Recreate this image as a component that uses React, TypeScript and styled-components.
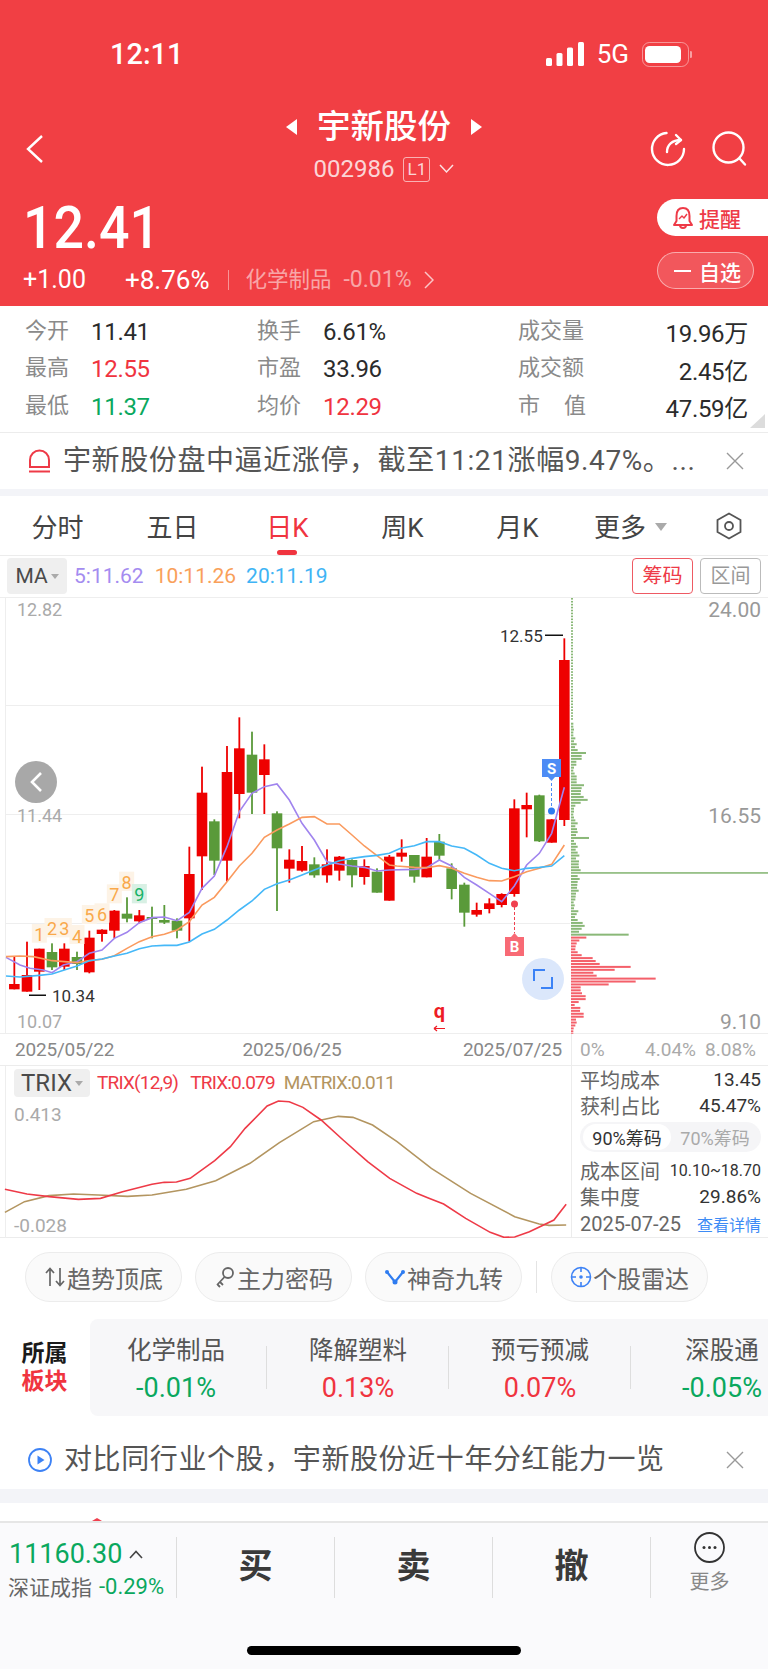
import styled, { createGlobalStyle } from 'styled-components';

const RED = '#f0343f';
const GREEN = '#0aa85e';
const BAND = '#f3f4f8';
const LINE = '#ececec';

const GlobalStyle = createGlobalStyle`
  html, body {
    margin: 0;
    padding: 0;
    background: #fff;
  }
  * {
    box-sizing: border-box;
  }
  body {
    font-family: Roboto, "Noto Sans CJK SC", sans-serif;
  }
`;

const Page = styled.div`
  width: 768px;
  height: 1669px;
  overflow: hidden;
  background: #fff;
  display: flex;
  flex-direction: column;
`;

/* header */
const Header = styled.header`
  height: 306px;
  background: #f13f44;
  color: #fff;
  flex: none;
`;

const StatusBar = styled.div`
  height: 68px;
  padding: 40px 76px 0 110px;
  display: flex;
  align-items: center;
  justify-content: space-between;
`;

const Clock = styled.div`
  font-size: 29px;
  font-weight: 500;
  line-height: 34px;
`;

const StatusIcons = styled.div`
  display: flex;
  align-items: center;
  gap: 13px;
  font-size: 26px;
  line-height: 34px;
`;

const NavRow = styled.div`
  margin-top: 40px;
  height: 82px;
  display: grid;
  grid-template-columns: 1fr auto 1fr;
  align-items: center;
`;

const BackButton = styled.div`
  padding-left: 26px;
  display: flex;
`;

const TitleBlock = styled.div`
  align-self: start;
  display: flex;
  flex-direction: column;
  align-items: center;
`;

const TitleLine = styled.div`
  display: flex;
  align-items: center;
  gap: 20px;
  height: 38px;
  font-size: 33.5px;
  line-height: 38px;
  font-weight: 500;
`;

const CodeLine = styled.div`
  margin-top: 11px;
  height: 24px;
  display: flex;
  align-items: center;
  gap: 9px;
  font-size: 24px;
  color: rgba(255, 255, 255, 0.8);
`;

const LevelTag = styled.span`
  width: 27px;
  height: 25px;
  border: 1px solid rgba(255, 255, 255, 0.6);
  border-radius: 3px;
  font-size: 17px;
  display: flex;
  align-items: center;
  justify-content: center;
`;

const NavActions = styled.div`
  display: flex;
  justify-content: flex-end;
  gap: 26px;
  padding-right: 20px;
`;

const QuoteRow = styled.div`
  margin-top: 6px;
  display: flex;
  justify-content: space-between;
`;

const QuoteLeft = styled.div`
  padding-left: 23px;
`;

const Price = styled.div`
  font-size: 59px;
  font-weight: 500;
  line-height: 58px;
  height: 58px;
  transform: scaleX(0.91);
  transform-origin: 0 50%;
  margin-top: 3px;
`;

const ChangeLine = styled.div`
  margin-top: 11px;
  height: 24px;
  display: flex;
  align-items: center;
  font-size: 25px;
  line-height: 24px;
`;

const ChangeValue = styled.span`
  width: 102px;
  flex: none;
`;

const ChangePct = styled.span`
  font-size: 26px;
`;

const Sep = styled.span`
  width: 1px;
  height: 20px;
  margin: 0 17px 0 18px;
  background: rgba(255, 255, 255, 0.45);
`;

const SectorLink = styled.span`
  display: flex;
  align-items: center;
  gap: 12px;
  font-size: 21.5px;
  color: rgba(255, 255, 255, 0.55);
`;

const SectorPct = styled.span`
  font-size: 23px;
`;

const QuoteRight = styled.div`
  padding-top: 3px;
  width: 111px;
  display: flex;
  flex-direction: column;
  gap: 16px;
`;

const RemindButton = styled.div`
  height: 37px;
  border-radius: 19px 0 0 19px;
  background: #fff;
  color: #ee3a47;
  font-size: 21px;
  font-weight: 500;
  display: flex;
  align-items: center;
  gap: 5px;
  padding-left: 15px;
`;

const WatchButton = styled.div`
  width: 97px;
  height: 37px;
  border-radius: 19px;
  border: 1px solid rgba(255, 255, 255, 0.5);
  background: rgba(255, 255, 255, 0.13);
  font-size: 21px;
  font-weight: 500;
  display: flex;
  align-items: center;
  gap: 8px;
  padding-left: 16px;
  &::before {
    content: '';
    width: 17px;
    height: 2px;
    background: #fff;
  }
`;

/* stats */
const Stats = styled.div`
  height: 126px;
  flex: none;
  padding: 7px 20px 0 25px;
  display: grid;
  grid-template-columns: 232px 261px 230px;
  grid-auto-rows: 37.5px;
  position: relative;
  &::after {
    content: '';
    position: absolute;
    right: 3px;
    bottom: 4px;
    border-style: solid;
    border-width: 0 0 14px 15px;
    border-color: transparent transparent #dcdcdc transparent;
  }
`;

const StatCell = styled.div`
  display: flex;
  align-items: center;
  font-size: 24px;
  letter-spacing: -0.3px;
  color: #2b2b2b;
`;

const StatLabel = styled.span`
  width: 66px;
  flex: none;
  font-size: 22px;
  letter-spacing: 0;
  line-height: 28px;
  margin-bottom: 2px;
  color: #8a8a8a;
`;

const WideLabel = styled.span<{ $spread?: boolean }>`
  width: 68px;
  flex: none;
  font-size: 22px;
  letter-spacing: 0;
  line-height: 28px;
  margin-bottom: 2px;
  color: #8a8a8a;
  display: flex;
  justify-content: ${(p) => (p.$spread ? 'space-between' : 'flex-start')};
  white-space: nowrap;
`;

const StatValue = styled.span<{ $color?: string; $right?: boolean }>`
  color: ${(p) => p.$color || '#2b2b2b'};
  margin-left: ${(p) => (p.$right ? 'auto' : '0')};
`;

/* notice */
const Notice = styled.div<{ $h: number; $top: number }>`
  height: ${(p) => p.$h}px;
  flex: none;
  padding: ${(p) => p.$top}px 24px 0 28px;
  display: flex;
  align-items: center;
  font-size: 28px;
  line-height: 36px;
  color: #555;
  white-space: nowrap;
  border-top: ${(p) => (p.$top ? 'none' : `1px solid ${LINE}`)};
`;

const NoticeText = styled.span`
  margin-left: 12px;
  flex: 1;
  letter-spacing: 0.6px;
`;

const Band = styled.div<{ $h: number }>`
  height: ${(p) => p.$h}px;
  flex: none;
  background: ${BAND};
`;

/* tabs */
const Tabs = styled.nav`
  height: 60px;
  flex: none;
  display: grid;
  grid-template-columns: repeat(6, 115px) 1fr;
  border-bottom: 1px solid ${LINE};
`;

const Tab = styled.div<{ $active?: boolean; $shift?: number }>`
  position: relative;
  display: flex;
  align-items: center;
  justify-content: center;
  gap: 9px;
  padding-right: ${(p) => p.$shift || 0}px;
  font-size: 26px;
  color: ${(p) => (p.$active ? RED : '#444')};
  &::after {
    content: '';
    display: ${(p) => (p.$active ? 'block' : 'none')};
    position: absolute;
    left: 47px;
    bottom: 0;
    width: 20px;
    height: 5px;
    border-radius: 3px;
    background: ${RED};
  }
`;

const Caret = styled.span`
  width: 0;
  height: 0;
  border-style: solid;
  border-width: 8px 6px 0 6px;
  border-color: #aaa transparent transparent transparent;
  margin-top: 2px;
`;

/* MA row */
const MaRow = styled.div`
  height: 41px;
  flex: none;
  padding: 2px 7px 0 7px;
  display: flex;
  align-items: flex-start;
  font-size: 21px;
  line-height: 36px;
`;

const GreyChip = styled.div<{ $w: number; $h: number; $size?: number }>`
  width: ${(p) => p.$w}px;
  height: ${(p) => p.$h}px;
  background: #efefef;
  border-radius: 4px;
  color: #4a4a4a;
  font-size: ${(p) => p.$size || 21}px;
  display: flex;
  align-items: center;
  justify-content: center;
  gap: 3px;
  flex: none;
  &::after {
    content: '';
    border-style: solid;
    border-width: 5px 4px 0 4px;
    border-color: #aaa transparent transparent transparent;
  }
`;

const MaValue = styled.span<{ $color: string; $gap: number }>`
  color: ${(p) => p.$color};
  margin-left: ${(p) => p.$gap}px;
`;

const OutlineButton = styled.div<{ $active?: boolean }>`
  width: 61px;
  height: 36px;
  border-radius: 4px;
  border: 1px solid ${(p) => (p.$active ? '#ee5a63' : '#bbb')};
  color: ${(p) => (p.$active ? '#ee3a47' : '#999')};
  font-size: 20px;
  display: flex;
  align-items: center;
  justify-content: center;
`;

const ToggleGroup = styled.div`
  margin-left: auto;
  display: flex;
  gap: 7px;
`;

/* main chart */
const ChartPane = styled.div`
  position: relative;
  height: 437px;
  flex: none;
  svg {
    display: block;
  }
`;

const RoundButton = styled.div<{ $x: number; $y: number; $bg: string }>`
  position: absolute;
  left: ${(p) => p.$x}px;
  top: ${(p) => p.$y}px;
  width: 42px;
  height: 42px;
  border-radius: 50%;
  background: ${(p) => p.$bg};
  display: flex;
  align-items: center;
  justify-content: center;
`;

/* axis */
const AxisRow = styled.div`
  height: 32px;
  flex: none;
  display: grid;
  grid-template-columns: 571px 1fr;
  border-bottom: 1px solid ${LINE};
  font-size: 19px;
  letter-spacing: -0.2px;
`;

const AxisDates = styled.div`
  padding: 0 9px 0 15px;
  display: flex;
  align-items: center;
  justify-content: space-between;
  color: #888;
  span:nth-child(2) {
    margin-left: 7px;
  }
`;

const AxisPct = styled.div`
  border-left: 1px solid ${LINE};
  padding: 0 12px 0 8px;
  display: flex;
  align-items: center;
  gap: 9px;
  font-size: 19px;
  letter-spacing: 0;
  color: #aaa;
  span:first-child {
    margin-right: auto;
  }
`;

/* TRIX */
const TrixRow = styled.div`
  height: 172px;
  flex: none;
  display: grid;
  grid-template-columns: 571px 1fr;
  border-bottom: 1px solid ${LINE};
`;

const TrixPane = styled.div`
  position: relative;
  svg {
    display: block;
  }
`;

const TrixLegend = styled.div`
  position: absolute;
  left: 14px;
  top: 3px;
  display: flex;
  align-items: center;
  font-size: 19px;
  line-height: 28px;
`;

const LegendValue = styled.span<{ $color: string; $gap: number }>`
  color: ${(p) => p.$color};
  margin-left: ${(p) => p.$gap}px;
  letter-spacing: -0.8px;
`;

const ChipPanel = styled.div`
  border-left: 1px solid ${LINE};
  padding: 0 7px 0 8px;
  display: flex;
  flex-direction: column;
`;

const ChipRow = styled.div<{ $mt?: number }>`
  height: 26.5px;
  margin-top: ${(p) => p.$mt || 0}px;
  display: flex;
  align-items: center;
  justify-content: space-between;
  font-size: 20px;
  color: #666;
  white-space: nowrap;
`;

const ChipValue = styled.span<{ $size?: number }>`
  font-size: ${(p) => p.$size || 19}px;
  color: #333;
`;

const ChipDate = styled.span`
  font-size: 20px;
  color: #666;
`;

const Segment = styled.div`
  margin-top: 3px;
  height: 30px;
  border-radius: 15px;
  background: #f5f5f7;
  display: flex;
  padding: 2px 0 2px 3px;
`;

const SegmentItem = styled.div<{ $active?: boolean }>`
  width: 88px;
  border-radius: 13px;
  background: ${(p) => (p.$active ? '#fff' : 'transparent')};
  color: ${(p) => (p.$active ? '#333' : '#aaa')};
  font-size: 18px;
  display: flex;
  align-items: center;
  justify-content: center;
`;

const DetailLink = styled.span`
  font-size: 16px;
  color: #3d8bf5;
`;

/* tool chips */
const ToolRow = styled.div`
  height: 81px;
  flex: none;
  padding: 14px 0 0 25px;
  display: flex;
  align-items: flex-start;
  gap: 13px;
`;

const ToolChip = styled.div`
  width: 157px;
  height: 50px;
  border-radius: 25px;
  border: 1px solid #ececec;
  background: #fafafa;
  color: #666;
  font-size: 24px;
  display: flex;
  align-items: center;
  justify-content: center;
  gap: 1px;
  flex: none;
`;

const ToolSep = styled.div`
  width: 1px;
  height: 32px;
  margin: 9px 1px 0;
  background: #e4e4e4;
`;

/* sectors */
const SectorRow = styled.div`
  height: 97px;
  flex: none;
  display: flex;
`;

const SectorTitle = styled.div`
  width: 90px;
  flex: none;
  display: flex;
  flex-direction: column;
  align-items: center;
  justify-content: center;
  padding-right: 1px;
  font-size: 23px;
  line-height: 28px;
  font-weight: 700;
  color: #1a1a1a;
  span {
    color: ${RED};
  }
`;

const SectorPanel = styled.div`
  flex: 1;
  background: #f7f7f9;
  border-radius: 8px 0 0 8px;
  display: flex;
  overflow: hidden;
  padding-left: 0;
`;

const SectorItem = styled.div<{ $first?: boolean }>`
  position: relative;
  width: 182px;
  margin-left: ${(p) => (p.$first ? -5 : 0)}px;
  flex: none;
  display: flex;
  flex-direction: column;
  align-items: center;
  padding-top: 15px;
  font-size: 24.5px;
  line-height: 34px;
  color: #555;
  &::after {
    content: '';
    position: absolute;
    right: 0;
    top: 27px;
    width: 1px;
    height: 43px;
    background: #dedede;
  }
`;

const SectorChange = styled.span<{ $color: string }>`
  margin-top: 3px;
  color: ${(p) => p.$color};
  font-size: 27px;
`;

/* bottom bar */
const Peek = styled.div`
  height: 18px;
  flex: none;
  position: relative;
  &::after {
    content: '';
    position: absolute;
    left: 92px;
    bottom: 0;
    border-style: solid;
    border-width: 0 5px 3px 5px;
    border-color: transparent transparent #f0404f transparent;
  }
`;

const BottomBar = styled.footer`
  flex: 1;
  background: #fafafc;
  border-top: 2px solid #e6e6e6;
  display: flex;
  flex-direction: column;
`;

const ActionRow = styled.div`
  margin-top: 14px;
  height: 54px;
  flex: none;
  display: grid;
  grid-template-columns: 176px 158px 158px 158px 1fr;
`;

const IndexCell = styled.div`
  padding-left: 9px;
  white-space: nowrap;
`;

const IndexTop = styled.div`
  display: flex;
  align-items: center;
  gap: 7px;
  height: 34px;
  font-size: 27px;
  color: ${GREEN};
`;

const IndexBottom = styled.div`
  margin-top: 3px;
  height: 24px;
  display: flex;
  align-items: center;
  gap: 7px;
  margin-left: -1px;
  font-size: 21px;
  color: #666;
  b {
    font-weight: 400;
    font-size: 22px;
    color: ${GREEN};
  }
`;

const TradeButton = styled.div`
  border-left: 1px solid #ddd;
  display: flex;
  align-items: center;
  justify-content: center;
  padding-bottom: 9px;
  font-size: 34px;
  font-weight: 700;
  color: #3a3a3a;
`;

const MoreCell = styled.div`
  border-left: 1px solid #ddd;
  display: flex;
  flex-direction: column;
  align-items: center;
  font-size: 20px;
  line-height: 24px;
  color: #888;
  svg {
    margin: -5px 0 7px;
    display: block;
  }
`;

const HomeBar = styled.div`
  margin: 55px auto 0;
  width: 274px;
  height: 9px;
  border-radius: 5px;
  background: #000;
`;

/* zoomed-crop coordinates from the chart, x and y at 3x */
const zx = (v: number) => v / 3;
const zy = (v: number) => 590 + v / 3;

type Candle = [number, 'r' | 'g', number, number, number, number];

const candles: Candle[] = [
  [43, 'r', 1100, 1182, 1198, 1198],
  [81, 'r', 1055, 1155, 1205, 1205],
  [118, 'r', 1076, 1076, 1145, 1200],
  [156, 'g', 1060, 1086, 1132, 1140],
  [193, 'r', 1060, 1076, 1130, 1140],
  [231, 'g', 1085, 1101, 1122, 1140],
  [268, 'r', 1022, 1043, 1147, 1150],
  [306, 'r', 1018, 1019, 1032, 1055],
  [343, 'r', 960, 962, 1022, 1045],
  [381, 'g', 922, 971, 986, 997],
  [418, 'r', 960, 976, 994, 1000],
  [456, 'g', 950, 981, 987, 1045],
  [493, 'g', 945, 990, 998, 1002],
  [531, 'g', 985, 992, 1022, 1045],
  [568, 'r', 770, 852, 985, 1055],
  [606, 'r', 530, 608, 799, 900],
  [643, 'g', 688, 694, 812, 855],
  [681, 'r', 468, 546, 812, 875],
  [718, 'r', 382, 475, 612, 685],
  [756, 'g', 425, 494, 608, 672],
  [793, 'r', 463, 508, 555, 672],
  [831, 'g', 664, 670, 775, 963],
  [868, 'r', 778, 809, 836, 878],
  [906, 'r', 768, 813, 842, 845],
  [943, 'g', 802, 823, 856, 863],
  [981, 'r', 778, 823, 856, 878],
  [1018, 'r', 798, 800, 842, 872],
  [1056, 'g', 808, 810, 856, 892],
  [1093, 'r', 808, 828, 861, 884],
  [1131, 'g', 835, 845, 908, 908],
  [1168, 'r', 795, 800, 932, 932],
  [1205, 'r', 748, 788, 800, 815],
  [1243, 'g', 795, 795, 860, 878],
  [1280, 'r', 744, 800, 862, 862],
  [1318, 'g', 732, 755, 797, 810],
  [1355, 'g', 820, 835, 897, 928],
  [1393, 'g', 878, 884, 968, 1010],
  [1430, 'r', 938, 960, 974, 980],
  [1468, 'r', 925, 940, 957, 970],
  [1505, 'r', 910, 912, 945, 952],
  [1543, 'r', 628, 655, 912, 920],
  [1580, 'r', 608, 645, 658, 742],
  [1618, 'g', 614, 616, 754, 756],
  [1655, 'r', 687, 688, 758, 758],
  [1693, 'r', 145, 210, 690, 708],
];

const toPoints = (pts: number[][]) => pts.map(([x, y]) => `${zx(x)},${zy(y)}`).join(' ');

const ma5 = [[18,1102],[60,1125],[90,1135],[130,1140],[156,1148],[190,1125],[231,1115],[268,1090],[306,1080],[343,1045],[381,1027],[418,998],[456,983],[493,981],[531,992],[568,967],[606,895],[643,858],[681,770],[718,665],[756,610],[793,590],[831,582],[868,630],[906,700],[943,750],[981,815],[1018,822],[1056,828],[1093,832],[1131,843],[1168,840],[1243,838],[1280,833],[1318,810],[1355,828],[1393,862],[1430,885],[1468,910],[1505,935],[1543,888],[1580,825],[1618,790],[1655,730],[1693,592]];
const ma10 = [[18,1100],[60,1098],[100,1100],[156,1112],[193,1115],[231,1118],[268,1112],[306,1108],[343,1097],[381,1075],[418,1055],[456,1040],[493,1033],[531,1020],[568,995],[606,945],[643,922],[681,875],[718,828],[756,790],[793,742],[831,720],[868,702],[906,682],[943,680],[981,702],[1018,702],[1056,735],[1093,768],[1131,797],[1168,825],[1190,828],[1243,832],[1280,833],[1318,827],[1355,835],[1393,850],[1430,862],[1468,872],[1505,873],[1543,860],[1580,845],[1618,835],[1655,823],[1693,765]];
const ma20 = [[18,1158],[60,1161],[118,1156],[156,1152],[193,1140],[231,1128],[268,1112],[306,1107],[343,1098],[381,1090],[418,1076],[456,1068],[493,1066],[531,1066],[568,1056],[606,1032],[643,1018],[681,990],[718,960],[756,933],[793,898],[831,881],[868,870],[906,855],[943,840],[981,825],[1018,812],[1056,805],[1093,800],[1131,796],[1168,790],[1202,775],[1243,767],[1280,755],[1318,755],[1355,768],[1393,775],[1430,795],[1468,820],[1505,835],[1543,842],[1580,835],[1618,832],[1655,828],[1693,797]];

// volume profile, bar end in 3x px from the crop at x=560, green runs down to the long bar
const profileGreen = [40,40,42,40,40,46,42,50,45,53,78,65,65,49,49,42,40,44,50,50,50,72,65,63,62,71,83,62,46,42,42,40,42,46,53,46,51,53,48,87,42,48,53,47,53,58,48,57,56,57,62,640,53,59,53,52,51,56,48,47,46,41,44,42,55,50,45,53,68,74,65,57,206];
const profileRed = [79,58,50,47,46,53,65,98,107,119,212,164,100,110,287,227,146,62,62,66,77,77,56,44,61,60,71,71,48,50,46,41,40,40];
const PROFILE_TOP = 722.7;
const PROFILE_STEP = 2.93;

const tdMarks: { n: string; x: number; y: number; top: number; bot: number; green?: boolean }[] = [
  { n: '1', x: 118, y: 1052, top: 1002, bot: 1058 },
  { n: '2', x: 156, y: 1036, top: 984, bot: 1042 },
  { n: '3', x: 193, y: 1036, top: 984, bot: 1042 },
  { n: '4', x: 231, y: 1060, top: 1005, bot: 1062 },
  { n: '5', x: 268, y: 996, top: 945, bot: 1002 },
  { n: '6', x: 306, y: 992, top: 940, bot: 998 },
  { n: '7', x: 343, y: 934, top: 883, bot: 940 },
  { n: '8', x: 380, y: 897, top: 845, bot: 903 },
  { n: '9', x: 418, y: 934, top: 882, bot: 940, green: true },
];

const trixRed = [[10,478],[55,492],[100,500],[160,508],[205,505],[250,485],[310,463],[335,457],[360,456],[388,445],[438,392],[470,350],[500,295],[545,228],[568,213],[590,215],[618,232],[655,270],[700,330],[750,395],[795,445],[850,490],[875,505],[905,522],[950,565],[1000,607],[1028,622],[1050,621],[1080,605],[1130,570],[1155,523]];
const trixTan = [[10,547],[50,515],[100,497],[150,492],[200,495],[260,499],[310,495],[380,478],[440,452],[510,400],[570,338],[640,275],[690,259],[720,262],[760,285],[810,335],[880,415],[960,490],[1050,560],[1100,582],[1120,586],[1155,585]];
const trixPoints = (pts: number[][]) => pts.map(([x, y]) => `${x / 2.04},${1030 + y / 3}`).join(' ');

function MainChart() {
  return (
    <svg width={768} height={437} viewBox="0 597 768 437">
      <line x1={0} x2={768} y1={597.5} y2={597.5} stroke="#eee" />
      <line x1={0} x2={768} y1={1033.5} y2={1033.5} stroke="#eee" />
      <line x1={5.5} x2={5.5} y1={597} y2={1034} stroke="#eee" />
      {[705, 814, 923].map((y) => (
        <line key={y} x1={6} x2={570} y1={y + 0.5} y2={y + 0.5} stroke="#eee" />
      ))}

      {candles.map(([x, c, wt, bt, bb, wb]) => {
        const fill = c === 'r' ? '#ee0000' : '#5a9a3a';
        return (
          <g key={x} fill={fill}>
            <rect x={zx(x) - 0.9} y={zy(wt)} width={1.8} height={(wb - wt) / 3} />
            <rect x={zx(x) - 5.3} y={zy(bt)} width={10.6} height={(bb - bt) / 3} />
          </g>
        );
      })}

      <polyline points={toPoints(ma5)} fill="none" stroke="#a084ee" strokeWidth={1.6} />
      <polyline points={toPoints(ma10)} fill="none" stroke="#fa9a5e" strokeWidth={1.6} />
      <polyline points={toPoints(ma20)} fill="none" stroke="#45b8f8" strokeWidth={1.6} />

      {tdMarks.map((m) => (
        <g key={m.n}>
          <rect x={zx(m.x) - 7.5} y={zy(m.top)} width={15} height={(m.bot - m.top) / 3} fill={m.green ? '#d8f0e4' : '#fdf3e6'} />
          <text x={zx(m.x)} y={zy(m.y)} fontSize={18} textAnchor="middle" fill={m.green ? '#19b368' : '#f9a94b'}>{m.n}</text>
        </g>
      ))}

      {/* chip distribution */}
      {Array.from({ length: 42 }).map((_, i) => (
        <rect key={i} x={571} y={598 + i * 2.93} width={2} height={1.6} fill="#8ab878" />
      ))}
      {profileGreen.map((v, i) => (
        <rect key={i} x={571} y={PROFILE_TOP + i * PROFILE_STEP} width={(v - 33) / 3} height={v === 640 ? 1.6 : 2} fill="#8ab878" />
      ))}
      {profileRed.map((v, i) => (
        <rect key={i} x={571} y={PROFILE_TOP + (profileGreen.length + i) * PROFILE_STEP} width={(v - 33) / 3} height={2} fill="#f4606a" />
      ))}

      {/* price labels */}
      <g fontSize={18} fill="#aaa">
        <text x={17} y={616}>12.82</text>
        <text x={17} y={822}>11.44</text>
        <text x={17} y={1028}>10.07</text>
      </g>
      <g fontSize={21} fill="#999" textAnchor="end">
        <text x={761} y={617}>24.00</text>
        <text x={761} y={823}>16.55</text>
        <text x={761} y={1029}>9.10</text>
      </g>

      <text x={500} y={642} fontSize={17} fill="#333">12.55</text>
      <rect x={545} y={634.5} width={18} height={1.5} fill="#111" />
      <text x={52} y={1002} fontSize={17} fill="#333">10.34</text>
      <rect x={29} y={994.5} width={17} height={1.5} fill="#111" />

      {/* S marker */}
      <path d="M542 759 H561 V777 H555 L551.5 781 L548 777 H542 Z" fill="#4d8cf5" />
      <text x={551.5} y={774} fontSize={15} fontWeight={700} fill="#fff" textAnchor="middle">S</text>
      <line x1={551.5} x2={551.5} y1={783} y2={808} stroke="#4d8cf5" strokeWidth={1} strokeDasharray="3 2" />
      <circle cx={551.5} cy={811} r={3.5} fill="#2f7cf0" />

      {/* B marker */}
      <path d="M505 937 H511 L514.5 933 L518 937 H524 V956 H505 Z" fill="#f86a75" />
      <text x={514.5} y={952} fontSize={15} fontWeight={700} fill="#fff" textAnchor="middle">B</text>
      <line x1={514.5} x2={514.5} y1={907} y2={933} stroke="#f0404f" strokeWidth={1} strokeDasharray="3 2" />
      <circle cx={514.5} cy={904} r={3.5} fill="#f0404f" />

      <text x={439.5} y={1018} fontSize={20} fontWeight={700} fill="#ee1c25" textAnchor="middle">q</text>
      <path d="M434 1028.5 H445 M434 1028.5 L437 1026 M434 1028.5 L437 1031" stroke="#ee1c25" strokeWidth={1.2} fill="none" />
    </svg>
  );
}

function TrixChart() {
  return (
    <svg width={571} height={172} viewBox="0 1066 571 172">
      <line x1={5.5} x2={5.5} y1={1066} y2={1238} stroke="#eee" />
      <polyline points={trixPoints(trixTan)} fill="none" stroke="#b39560" strokeWidth={1.6} />
      <polyline points={trixPoints(trixRed)} fill="none" stroke="#ee3a47" strokeWidth={1.6} />
      <g fontSize={19} fill="#aaa">
        <text x={14} y={1121}>0.413</text>
        <text x={14} y={1232}>-0.028</text>
      </g>
    </svg>
  );
}

function Signal() {
  return (
    <svg width={38} height={24} viewBox="0 0 38 24" fill="#fff">
      <rect x={0} y={16} width={6} height={8} rx={1.5} />
      <rect x={10.5} y={11} width={6} height={13} rx={1.5} />
      <rect x={21} y={5.5} width={6} height={18.5} rx={1.5} />
      <rect x={32} y={0} width={6} height={24} rx={1.5} />
    </svg>
  );
}

function Battery() {
  return (
    <svg width={50} height={25} viewBox="0 0 50 25">
      <rect x={0.5} y={0.5} width={46} height={24} rx={7} fill="none" stroke="rgba(255,255,255,.45)" />
      <rect x={3} y={4} width={36} height={17} rx={4.5} fill="#fff" />
      <path d="M48 9 a3 3 0 0 1 0 7 Z" fill="rgba(255,255,255,.5)" />
    </svg>
  );
}

function App() {
  return (
    <Page lang="zh-CN">
      <GlobalStyle />
      <Header>
        <StatusBar>
          <Clock>12:11</Clock>
          <StatusIcons>
            <Signal />
            <span>5G</span>
            <Battery />
          </StatusIcons>
        </StatusBar>
        <NavRow>
          <BackButton>
            <svg width={18} height={30} viewBox="0 0 18 30" fill="none" stroke="#fff" strokeWidth={2.4}>
              <path d="M16 2 L2 15 L16 28" />
            </svg>
          </BackButton>
          <TitleBlock>
            <TitleLine>
              <svg width={11} height={16} viewBox="0 0 11 16" fill="#fff"><path d="M11 0 V16 L0 8 Z" /></svg>
              宇新股份
              <svg width={11} height={16} viewBox="0 0 11 16" fill="#fff"><path d="M0 0 V16 L11 8 Z" /></svg>
            </TitleLine>
            <CodeLine>
              002986
              <LevelTag>L1</LevelTag>
              <svg width={15} height={10} viewBox="0 0 15 10" fill="none" stroke="rgba(255,255,255,.85)" strokeWidth={1.5}>
                <path d="M1 1 L7.5 8 L14 1" />
              </svg>
            </CodeLine>
          </TitleBlock>
          <NavActions>
            <svg width={36} height={36} viewBox="0 0 36 36" fill="none" stroke="#fff" strokeWidth={2.4} strokeLinecap="round" strokeLinejoin="round">
              <path d="M16.5 2 A16 16 0 1 0 34 18" />
              <path d="M17 21 C17 14 22 9 31 9" />
              <path d="M26 4 L31 9 L26 13" />
            </svg>
            <svg width={36} height={36} viewBox="0 0 36 36" fill="none" stroke="#fff" strokeWidth={2.4} strokeLinecap="round">
              <circle cx={16.5} cy={16.5} r={15} />
              <path d="M28 28 L33 33.5" />
            </svg>
          </NavActions>
        </NavRow>
        <QuoteRow>
          <QuoteLeft>
            <Price>12.41</Price>
            <ChangeLine>
              <ChangeValue>+1.00</ChangeValue>
              <ChangePct>+8.76%</ChangePct>
              <Sep />
              <SectorLink>
                化学制品
                <SectorPct>-0.01%</SectorPct>
                <svg width={10} height={18} viewBox="0 0 10 18" fill="none" stroke="rgba(255,255,255,.7)" strokeWidth={1.5}>
                  <path d="M1 1 L9 9 L1 17" />
                </svg>
              </SectorLink>
            </ChangeLine>
          </QuoteLeft>
          <QuoteRight>
            <RemindButton>
              <svg width={22} height={24} viewBox="0 0 22 24" fill="none" stroke="#ee3a47" strokeWidth={2} strokeLinejoin="round">
                <path d="M11 2 C6 2 4.5 6 4.5 10 V15 L2 19 H20 L17.5 15 V10 C17.5 6 16 2 11 2 Z" />
                <path d="M8 19 C8 23 14 23 14 19" />
                <path d="M7 13 L10 10 L12 12 L15 8" strokeWidth={1.4} />
              </svg>
              提醒
            </RemindButton>
            <WatchButton>自选</WatchButton>
          </QuoteRight>
        </QuoteRow>
      </Header>

      <Stats>
        <StatCell><StatLabel>今开</StatLabel><StatValue>11.41</StatValue></StatCell>
        <StatCell><StatLabel>换手</StatLabel><StatValue>6.61%</StatValue></StatCell>
        <StatCell><WideLabel>成交量</WideLabel><StatValue $right>19.96万</StatValue></StatCell>
        <StatCell><StatLabel>最高</StatLabel><StatValue $color={RED}>12.55</StatValue></StatCell>
        <StatCell><StatLabel>市盈</StatLabel><StatValue>33.96</StatValue></StatCell>
        <StatCell><WideLabel>成交额</WideLabel><StatValue $right>2.45亿</StatValue></StatCell>
        <StatCell><StatLabel>最低</StatLabel><StatValue $color={GREEN}>11.37</StatValue></StatCell>
        <StatCell><StatLabel>均价</StatLabel><StatValue $color={RED}>12.29</StatValue></StatCell>
        <StatCell><WideLabel $spread><span>市</span><span>值</span></WideLabel><StatValue $right>47.59亿</StatValue></StatCell>
      </Stats>

      <Notice $h={57} $top={0}>
        <svg width={23} height={24} viewBox="0 0 23 24" fill="none" stroke="#ee3a47" strokeWidth={2}>
          <path d="M2 18 V11 A9.5 9.5 0 0 1 21 11 V18 Z" />
          <path d="M1 22.5 H22" />
        </svg>
        <NoticeText>宇新股份盘中逼近涨停，截至11:21涨幅9.47%。...</NoticeText>
        <svg width={18} height={18} viewBox="0 0 18 18" stroke="#999" strokeWidth={1.4}>
          <path d="M1 1 L17 17 M17 1 L1 17" />
        </svg>
      </Notice>
      <Band $h={7} />

      <Tabs>
        <Tab>分时</Tab>
        <Tab>五日</Tab>
        <Tab $active>日K</Tab>
        <Tab>周K</Tab>
        <Tab>月K</Tab>
        <Tab $shift={4}>更多<Caret /></Tab>
        <Tab>
          <svg width={26} height={28} viewBox="0 0 26 28" fill="none" stroke="#555" strokeWidth={1.8}>
            <path d="M13 1.5 L24.5 8 V20 L13 26.5 L1.5 20 V8 Z" />
            <circle cx={13} cy={14} r={4} />
          </svg>
        </Tab>
      </Tabs>

      <MaRow>
        <GreyChip $w={60} $h={36}>MA</GreyChip>
        <MaValue $color="#a48cf0" $gap={7}>5:11.62</MaValue>
        <MaValue $color="#f9a05a" $gap={11}>10:11.26</MaValue>
        <MaValue $color="#3fb4f5" $gap={10}>20:11.19</MaValue>
        <ToggleGroup>
          <OutlineButton $active>筹码</OutlineButton>
          <OutlineButton>区间</OutlineButton>
        </ToggleGroup>
      </MaRow>

      <ChartPane>
        <MainChart />
        <RoundButton $x={15} $y={164} $bg="#a8a8a8">
          <svg width={14} height={22} viewBox="0 0 14 22" fill="none" stroke="#fff" strokeWidth={2.6}>
            <path d="M12 2 L3 11 L12 20" />
          </svg>
        </RoundButton>
        <RoundButton $x={522} $y={361} $bg="#dbe7fb">
          <svg width={20} height={20} viewBox="0 0 20 20" fill="none" stroke="#3b82f6" strokeWidth={2}>
            <path d="M1 12 V1 H12 M8 19 H19 V8" />
          </svg>
        </RoundButton>
      </ChartPane>

      <AxisRow>
        <AxisDates>
          <span>2025/05/22</span>
          <span>2025/06/25</span>
          <span>2025/07/25</span>
        </AxisDates>
        <AxisPct>
          <span>0%</span>
          <span>4.04%</span>
          <span>8.08%</span>
        </AxisPct>
      </AxisRow>

      <TrixRow>
        <TrixPane>
          <TrixChart />
          <TrixLegend>
            <GreyChip $w={76} $h={28} $size={24}>TRIX</GreyChip>
            <LegendValue $color="#ee3a47" $gap={7}>TRIX(12,9)</LegendValue>
            <LegendValue $color="#ee3a47" $gap={12}>TRIX:0.079</LegendValue>
            <LegendValue $color="#b39560" $gap={9}>MATRIX:0.011</LegendValue>
          </TrixLegend>
        </TrixPane>
        <ChipPanel>
          <ChipRow><span>平均成本</span><ChipValue>13.45</ChipValue></ChipRow>
          <ChipRow><span>获利占比</span><ChipValue>45.47%</ChipValue></ChipRow>
          <Segment>
            <SegmentItem $active>90%筹码</SegmentItem>
            <SegmentItem>70%筹码</SegmentItem>
          </Segment>
          <ChipRow $mt={5}><span>成本区间</span><ChipValue $size={16}>10.10~18.70</ChipValue></ChipRow>
          <ChipRow><span>集中度</span><ChipValue>29.86%</ChipValue></ChipRow>
          <ChipRow $mt={1}><ChipDate>2025-07-25</ChipDate><DetailLink>查看详情</DetailLink></ChipRow>
        </ChipPanel>
      </TrixRow>

      <ToolRow>
        <ToolChip>
          <svg width={22} height={22} viewBox="0 0 22 22" fill="none" stroke="#666" strokeWidth={1.7}>
            <path d="M6 20 V3 M2 7 L6 2.5 L10 7 M16 2 V19 M12 15 L16 19.5 L20 15" />
          </svg>
          趋势顶底
        </ToolChip>
        <ToolChip>
          <svg width={22} height={24} viewBox="0 0 22 24" fill="none" stroke="#666" strokeWidth={1.8}>
            <circle cx={14} cy={8} r={5} />
            <path d="M10.5 12 L3 20 M6 17 L9 20 M3.5 19.5 L6 22" />
          </svg>
          主力密码
        </ToolChip>
        <ToolChip>
          <svg width={22} height={22} viewBox="0 0 22 22" fill="none" stroke="#2f7cf0" strokeWidth={2.2}>
            <path d="M3 6 L11 16 L19 6" />
            <circle cx={3} cy={6} r={2} fill="#2f7cf0" stroke="none" />
            <circle cx={11} cy={16} r={2.5} fill="#2f7cf0" stroke="none" />
            <circle cx={19} cy={6} r={2} fill="#2f7cf0" stroke="none" />
          </svg>
          神奇九转
        </ToolChip>
        <ToolSep />
        <ToolChip>
          <svg width={22} height={22} viewBox="0 0 22 22" fill="none" stroke="#3d82f5" strokeWidth={1.6}>
            <circle cx={11} cy={11} r={9.5} />
            <path d="M11 1.5 V6 M11 16 V20.5 M1.5 11 H6 M16 11 H20.5" />
            <circle cx={11} cy={11} r={1.8} fill="#3d82f5" stroke="none" />
          </svg>
          个股雷达
        </ToolChip>
      </ToolRow>

      <SectorRow>
        <SectorTitle>
          所属
          <span>板块</span>
        </SectorTitle>
        <SectorPanel>
          <SectorItem $first>化学制品<SectorChange $color={GREEN}>-0.01%</SectorChange></SectorItem>
          <SectorItem>降解塑料<SectorChange $color={RED}>0.13%</SectorChange></SectorItem>
          <SectorItem>预亏预减<SectorChange $color={RED}>0.07%</SectorChange></SectorItem>
          <SectorItem>深股通<SectorChange $color={GREEN}>-0.05%</SectorChange></SectorItem>
        </SectorPanel>
      </SectorRow>

      <Notice $h={73} $top={14}>
        <svg width={24} height={24} viewBox="0 0 24 24" fill="none" stroke="#3d82f5" strokeWidth={1.8}>
          <circle cx={12} cy={12} r={11} />
          <path d="M9.5 7.5 L16.5 12 L9.5 16.5 Z" fill="#3d82f5" stroke="none" />
        </svg>
        <NoticeText>对比同行业个股，宇新股份近十年分红能力一览</NoticeText>
        <svg width={18} height={18} viewBox="0 0 18 18" stroke="#999" strokeWidth={1.4}>
          <path d="M1 1 L17 17 M17 1 L1 17" />
        </svg>
      </Notice>
      <Band $h={14} />
      <Peek />

      <BottomBar>
        <ActionRow>
          <IndexCell>
            <IndexTop>
              11160.30
              <svg width={14} height={9} viewBox="0 0 14 9" fill="none" stroke="#444" strokeWidth={1.6}>
                <path d="M1 8 L7 1.5 L13 8" />
              </svg>
            </IndexTop>
            <IndexBottom>深证成指<b>-0.29%</b></IndexBottom>
          </IndexCell>
          <TradeButton>买</TradeButton>
          <TradeButton>卖</TradeButton>
          <TradeButton>撤</TradeButton>
          <MoreCell>
            <svg width={31} height={31} viewBox="0 0 31 31" fill="none" stroke="#333" strokeWidth={1.8}>
              <circle cx={15.5} cy={15.5} r={14.5} />
              <g fill="#333" stroke="none">
                <circle cx={10} cy={15.5} r={1.5} />
                <circle cx={15.5} cy={15.5} r={1.5} />
                <circle cx={21} cy={15.5} r={1.5} />
              </g>
            </svg>
            更多
          </MoreCell>
        </ActionRow>
        <HomeBar />
      </BottomBar>
    </Page>
  );
}

export default App;
